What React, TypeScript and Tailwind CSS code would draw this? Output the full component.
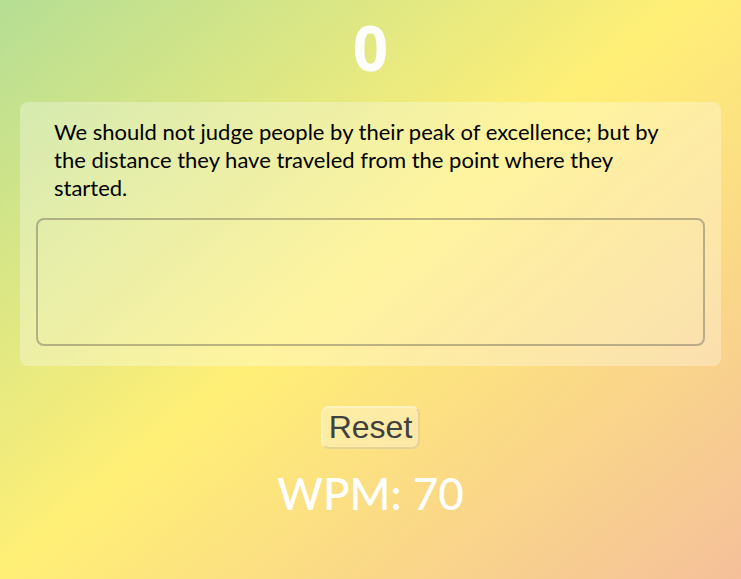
import { useState } from "react";

const quote =
  "We should not judge people by their peak of excellence; but by the distance they have traveled from the point where they started.";

export default function App() {
  const [typed, setTyped] = useState("");
  return (
    <main className="flex min-h-screen flex-col items-center bg-[linear-gradient(140deg,#b5de94_0%,#ffef76_48%,#f5c09a_100%)] px-5 pt-5 font-['Gill_Sans','Gill_Sans_MT',Lato,sans-serif] text-black">
      <div className="font-['Open_Sans',sans-serif] text-[62px] leading-[54px] font-bold text-white">0</div>
      <section className="mt-7 w-full rounded-lg bg-white/30 p-4 pb-5">
        <p className="mb-4 px-[18px] text-[22px] leading-7">{quote}</p>
        <textarea
          aria-label="Type the quote"
          value={typed}
          onChange={(e) => setTyped(e.target.value)}
          className="block h-32 w-full resize-none rounded-lg border-2 border-[#7c745d]/50 bg-transparent px-4 py-2 text-[22px] outline-none"
        />
      </section>
      <button
        type="button"
        onClick={() => setTyped("")}
        className="mt-10 rounded-lg border-2 border-t-white/30 border-r-black/10 border-b-black/10 border-l-white/30 bg-white/30 px-1.5 font-['Liberation_Sans',Arial,sans-serif] text-[32px] leading-[39px] text-[#404040]"
      >
        Reset
      </button>
      <p className="mt-5 text-[44px] leading-12 font-medium text-white">WPM: 70</p>
    </main>
  );
}
